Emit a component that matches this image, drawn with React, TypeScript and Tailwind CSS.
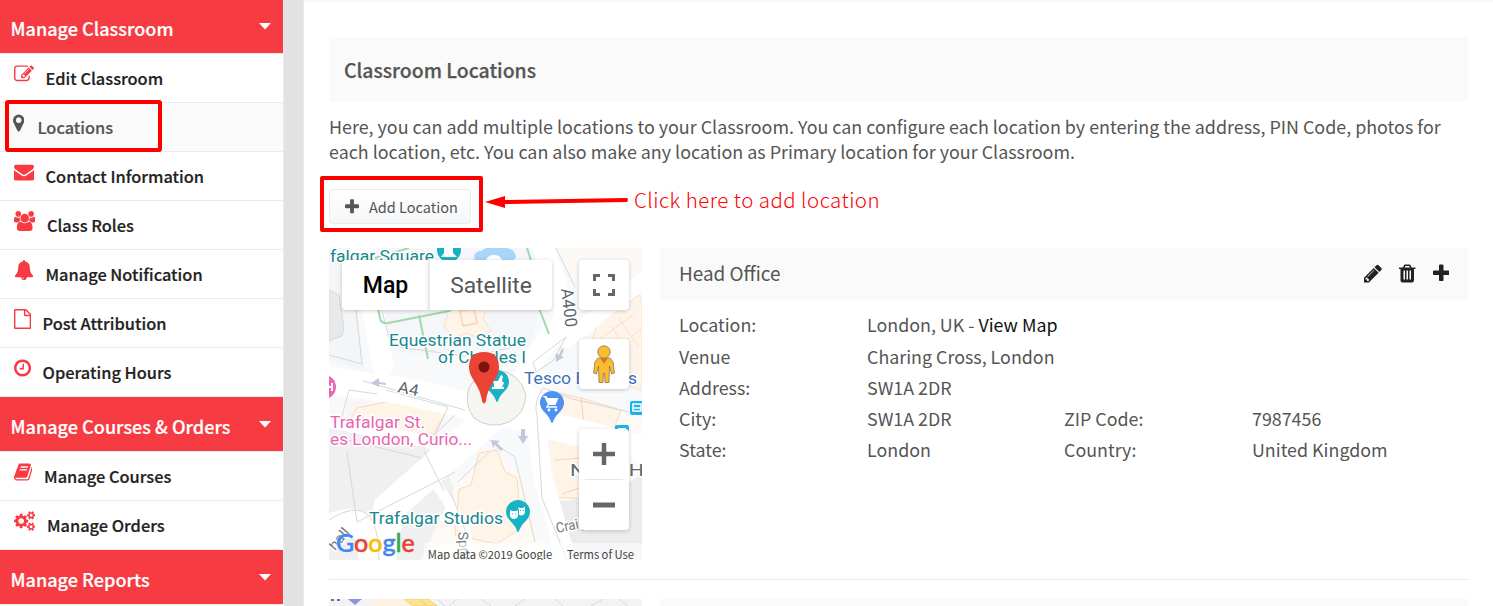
import { ReactNode } from "react";

interface IconShape {
  box: string;
  width: number;
  d: string;
}

const ICONS: Record<string, IconShape> = {
  edit: {
    box: "0 0 1792 1792",
    width: 20,
    d: "M888 1184l116-116-152-152-116 116v56h96v96h56zm440-720q-16-16-33 1l-350 350q-17 17-1 33t33-1l350-350q17-17 1-33zm80 594v190q0 119-84.500 203.500t-203.500 84.500h-832q-119 0-203.500-84.500t-84.500-203.500v-832q0-119 84.500-203.500t203.500-84.500h832q63 0 117 25 15 7 18 23 3 17-9 29l-49 49q-14 14-32 8-23-6-45-6h-832q-66 0-113 47t-47 113v832q0 66 47 113t113 47h832q66 0 113-47t47-113v-126q0-13 9-22l64-64q15-15 35-7t20 29zm-96-738l288 288-672 672h-288v-288zm444 132l-92 92-288-288 92-92q28-28 68-28t68 28l152 152q28 28 28 68t-28 68z",
  },
  marker: {
    box: "384 0 1024 1792",
    width: 11.4,
    d: "M1152 640q0-106-75-181t-181-75-181 75-75 181 75 181 181 75 181-75 75-181zm256 0q0 109-33 179l-364 774q-16 33-47.500 52t-67.500 19-67.500-19-46.500-52l-365-774q-33-70-33-179 0-212 150-362t362-150 362 150 150 362z",
  },
  envelope: {
    box: "0 0 1792 1792",
    width: 20,
    d: "M1792 710v794q0 66-47 113t-113 47h-1472q-66 0-113-47t-47-113v-794q44 49 101 87 362 246 497 345 57 42 92.500 65.500t94.500 48 110 24.500h2q51 0 110-24.500t94.500-48 92.500-65.500q170-123 498-345 57-39 100-87zm0-294q0 79-49 151t-122 123q-376 261-468 325-10 7-42.500 30.500t-54 38-52 32.500-57.500 27-50 9h-2q-23 0-50-9t-57.500-27-52-32.500-54-38-42.500-30.500q-91-64-262-182.500t-205-142.500q-62-42-117-115.500t-55-136.500q0-78 41.500-130t118.500-52h1472q65 0 112.500 47t47.500 113z",
  },
  users: {
    box: "0 0 1920 1792",
    width: 21.4,
    d: "M593 896q-162 5-265 128h-134q-82 0-138-40.500t-56-118.500q0-353 124-353 6 0 43.500 21t97.500 42.500 119 21.500q67 0 133-23-5 37-5 66 0 139 81 256zm1071 637q0 120-73 189.500t-194 69.500h-874q-121 0-194-69.500t-73-189.500q0-53 3.500-103.500t14-109 26.500-108.500 43-97.500 62-81 85.500-53.500 111.500-20q10 0 43 21.500t73 48 107 48 135 21.500 135-21.500 107-48 73-48 43-21.500q61 0 111.500 20t85.500 53.500 62 81 43 97.500 26.500 108.500 14 109 3.500 103.500zm-1024-1277q0 106-75 181t-181 75-181-75-75-181 75-181 181-75 181 75 75 181zm704 384q0 159-112.500 271.500t-271.500 112.500-271.500-112.500-112.500-271.500 112.500-271.500 271.500-112.500 271.500 112.500 112.500 271.500zm576 225q0 78-56 118.500t-138 40.500h-134q-103-123-265-128 81-117 81-256 0-29-5-66 66 23 133 23 59 0 119-21.500t97.500-42.500 43.500-21q124 0 124 353zm-128-609q0 106-75 181t-181 75-181-75-75-181 75-181 181-75 181 75 75 181z",
  },
  bell: {
    box: "0 0 1792 1792",
    width: 20,
    d: "M912 1696q0-16-16-16-59 0-101.5-42.5t-42.500-101.5q0-16-16-16t-16 16q0 73 51.500 124.500t124.500 51.500q16 0 16-16zm816-288q0 52-38 90t-90 38h-448q0 106-75 181t-181 75-181-75-75-181h-448q-52 0-90-38t-38-90q50-42 91-88t85-119.500 74.500-158.500 50-206 19.500-260q0-152 117-282.500t307-158.500q-8-19-8-39 0-40 28-68t68-28 68 28 28 68q0 20-8 39 190 28 307 158.500t117 282.500q0 139 19.500 260t50 206 74.500 158.500 85 119.500 91 88z",
  },
  file: {
    box: "128 0 1536 1792",
    width: 17.1,
    d: "M1596 380q28 28 48 76t20 88v1152q0 40-28 68t-68 28h-1344q-40 0-68-28t-28-68v-1600q0-40 28-68t68-28h896q40 0 88 20t76 48zm-444-244v376h376q-10-29-22-41l-313-313q-12-12-41-22zm384 1528v-1024h-416q-40 0-68-28t-28-68v-416h-768v1536h1280z",
  },
  clock: {
    box: "128 0 1536 1792",
    width: 17.1,
    d: "M1024 544v448q0 14-9 23t-23 9h-320q-14 0-23-9t-9-23v-64q0-14 9-23t23-9h224v-352q0-14 9-23t23-9h64q14 0 23 9t9 23zm416 352q0-148-73-273t-198-198-273-73-273 73-198 198-73 273 73 273 198 198 273 73 273-73 198-198 73-273zm224 0q0 209-103 385.500t-279.500 279.500-385.500 103-385.500-103-279.500-279.500-103-385.500 103-385.500 279.500-279.500 385.500-103 385.500 103 279.500 279.500 103 385.500z",
  },
  book: {
    box: "64 0 1664 1792",
    width: 18.6,
    d: "M1703 478q40 57 18 129l-275 906q-19 64-76.500 107.500t-122.500 43.500h-923q-77 0-148.500-53.500t-99.500-131.500q-24-67-2-127 0-4 3-27t4-37q1-8-3-21.500t-3-19.500q2-11 8-21t16.500-23.500 16.500-23.500q23-38 45-91.500t30-91.500q3-10 .5-30t-.5-28q3-11 17-28t17-23q21-36 42-92t25-90q1-9-2.500-32t.5-28q4-13 22-30.500t22-22.500q19-26 42.500-84.500t27.500-96.500q1-8-3-25.500t-2-26.500q2-8 9-18t18-23 17-21q8-12 16.500-30.500t15-35 16-36 19.500-32 26.500-23.500 36-11.500 47.500 5.500l-1 3q38-9 51-9h761q74 0 114 56t18 130l-274 906q-36 119-71.500 153.500t-128.500 34.500h-869q-27 0-38 15-11 16-1 43 24 70 144 70h923q29 0 56-15.500t35-41.500l300-987q7-22 5-57 38 15 59 43zm-1064 2q-4 13 2 22.500t20 9.500h608q13 0 25.500-9.500t16.500-22.500l21-64q4-13-2-22.500t-20-9.500h-608q-13 0-25.500 9.500t-16.500 22.500zm-83 256q-4 13 2 22.500t20 9.500h608q13 0 25.500-9.500t16.500-22.500l21-64q4-13-2-22.500t-20-9.500h-608q-13 0-25.500 9.500t-16.500 22.500z",
  },
  cogs: {
    box: "0 0 1920 1792",
    width: 21.4,
    d: "M896 896q0-106-75-181t-181-75-181 75-75 181 75 181 181 75 181-75 75-181zm768 512q0-52-38-90t-90-38-90 38-38 90q0 53 37.500 90.500t90.500 37.500 90.500-37.500 37.500-90.500zm0-1024q0-52-38-90t-90-38-90 38-38 90q0 53 37.500 90.500t90.500 37.500 90.500-37.500 37.500-90.500zm-384 421v185q0 10-7 19.500t-16 10.500l-155 24q-11 35-32 76 34 48 90 115 7 11 7 20 0 12-7 19-23 30-82.500 89.500t-78.500 59.500q-11 0-21-7l-115-90q-37 19-77 31-11 108-23 155-7 24-30 24h-186q-11 0-20-7.500t-10-17.500l-23-153q-34-10-75-31l-118 89q-7 7-20 7-11 0-21-8-144-133-144-160 0-9 7-19 10-14 41-53t47-61q-23-44-35-82l-152-24q-10-1-17-9.500t-7-19.500v-185q0-10 7-19.500t16-10.500l155-24q11-35 32-76-34-48-90-115-7-11-7-20 0-12 7-20 22-30 82-89t79-59q11 0 21 7l115 90q34-18 77-32 11-108 23-154 7-24 30-24h186q11 0 20 7.500t10 17.500l23 153q34 10 75 31l118-89q8-7 20-7 11 0 21 8 144 133 144 160 0 8-7 19-12 16-42 54t-45 60q23 48 34 82l152 23q10 2 17 10.500t7 19.500zm640 533v140q0 16-149 31-12 27-30 52 51 113 51 138 0 4-4 7-122 71-124 71-8 0-46-47t-52-68q-20 2-30 2t-30-2q-14 21-52 68t-46 47q-2 0-124-71-4-3-4-7 0-25 51-138-18-25-30-52-149-15-149-31v-140q0-16 149-31 13-29 30-52-51-113-51-138 0-4 4-7 4-2 35-20t59-34 30-16q8 0 46 46.500t52 67.500q20-2 30-2t30 2q51-71 92-112l6-2q4 0 124 70 4 3 4 7 0 25-51 138 17 23 30 52 149 15 149 31zm0-1024v140q0 16-149 31-12 27-30 52 51 113 51 138 0 4-4 7-122 71-124 71-8 0-46-47t-52-68q-20 2-30 2t-30-2q-14 21-52 68t-46 47q-2 0-124-71-4-3-4-7 0-25 51-138-18-25-30-52-149-15-149-31v-140q0-16 149-31 13-29 30-52-51-113-51-138 0-4 4-7 4-2 35-20t59-34 30-16q8 0 46 46.500t52 67.500q20-2 30-2t30 2q51-71 92-112l6-2q4 0 124 70 4 3 4 7 0 25-51 138 17 23 30 52 149 15 149 31z",
  },
  pencil: {
    box: "128 0 1536 1792",
    width: 18,
    d: "M491 1536l91-91-235-235-91 91v107h128v128h107zm523-928q0-22-22-22-10 0-17 7l-542 542q-7 7-7 17 0 22 22 22 10 0 17-7l542-542q7-7 7-17zm-54-192l416 416-832 832h-416v-416zm683 96q0 53-37 90l-166 166-416-416 166-165q36-38 90-38 53 0 91 38l235 234q37 39 37 91z",
  },
  trash: {
    box: "192 0 1408 1792",
    width: 16.5,
    d: "M704 1376v-704q0-14-9-23t-23-9h-64q-14 0-23 9t-9 23v704q0 14 9 23t23 9h64q14 0 23-9t9-23zm256 0v-704q0-14-9-23t-23-9h-64q-14 0-23 9t-9 23v704q0 14 9 23t23 9h64q14 0 23-9t9-23zm256 0v-704q0-14-9-23t-23-9h-64q-14 0-23 9t-9 23v704q0 14 9 23t23 9h64q14 0 23-9t9-23zm-544-992h448l-48-117q-7-9-17-11h-317q-10 2-17 11zm928 32v64q0 14-9 23t-23 9h-96v948q0 83-47 143.500t-113 60.500h-832q-66 0-113-58.500t-47-141.500v-952h-96q-14 0-23-9t-9-23v-64q0-14 9-23t23-9h309l70-167q15-37 54-63t79-26h320q40 0 79 26t54 63l70 167h309q14 0 23 9t9 23z",
  },
  plus: {
    box: "192 0 1408 1792",
    width: 16.5,
    d: "M1600 736v192q0 40-28 68t-68 28h-416v416q0 40-28 68t-68 28h-192q-40 0-68-28t-28-68v-416h-416q-40 0-68-28t-28-68v-192q0-40 28-68t68-28h416v-416q0-40 28-68t68-28h192q40 0 68 28t28 68v416h416q40 0 68 28t28 68z",
  },
};

function Icon({ name, scale = 1 }: { name: string; scale?: number }) {
  const { box, width, d } = ICONS[name];
  return (
    <svg viewBox={box} width={width * scale} className="shrink-0 fill-current" aria-hidden="true">
      <path d={d} />
    </svg>
  );
}

interface MenuItem {
  icon: string;
  label: string;
  active?: boolean;
}

const MENU: { title: string; items: MenuItem[] }[] = [
  {
    title: "Manage Classroom",
    items: [
      { icon: "edit", label: "Edit Classroom" },
      { icon: "marker", label: "Locations", active: true },
      { icon: "envelope", label: "Contact Information" },
      { icon: "users", label: "Class Roles" },
      { icon: "bell", label: "Manage Notification" },
      { icon: "file", label: "Post Attribution" },
      { icon: "clock", label: "Operating Hours" },
    ],
  },
  {
    title: "Manage Courses & Orders",
    items: [
      { icon: "book", label: "Manage Courses" },
      { icon: "cogs", label: "Manage Orders" },
    ],
  },
  { title: "Manage Reports", items: [] },
];

function Sidebar() {
  return (
    <aside className="w-[283px] shrink-0">
      {MENU.map((group, i) => (
        <section key={group.title}>
          <h2
            className={
              i === 0
                ? "flex h-[54px] justify-between border-b border-[#ebebeb] bg-[#f63b42] pt-3.5 pr-3 pl-[10.500px] text-white"
                : "flex h-[55px] justify-between border-b border-[#ebebeb] bg-[#f63b42] pt-[14.500px] pr-3 pl-[10.500px] text-white"
            }
          >
            <span className="text-[18.100px] leading-7 font-medium [-webkit-text-stroke:0.2px]">{group.title}</span>
            <svg viewBox="0 0 12 7" className="mt-[9px] h-[7px] w-3 fill-white">
              <path d="M0 0h12L6 6.500z" />
            </svg>
          </h2>
          <ul>
            {group.items.map((item) => (
              <li
                key={item.label}
                className={
                  item.active
                    ? "relative flex h-[49px] gap-[13px] border-b border-[#ebebeb] bg-[#fafafa] pl-[13px] text-[#555]"
                    : "flex h-[49px] gap-3 border-b border-[#ebebeb] pl-[13.500px] text-[#222]"
                }
              >
                <span className={item.active ? "mt-2.5 flex h-5" : "mt-2.5 flex h-5 text-[#f63b42]"}>
                  <Icon name={item.icon} />
                </span>
                <span className="mt-3 h-6 text-[16.400px] leading-6 font-medium [-webkit-text-stroke:0.2px]">{item.label}</span>
                {item.active && (
                  <span className="absolute -top-[3px] left-[4.500px] h-[52px] w-[157px] rounded-[3px] border-4 border-[#fe0000]" />
                )}
              </li>
            ))}
          </ul>
        </section>
      ))}
    </aside>
  );
}

interface LabelProps {
  x: number;
  y: number;
  size: number;
  color: string;
  width: number;
  children: ReactNode;
}

function MapLabel({ x, y, size, color, width, children }: LabelProps) {
  return (
    <text
      x={x}
      y={y}
      fontSize={size}
      textLength={width}
      lengthAdjust="spacingAndGlyphs"
      fill={color}
      stroke="#fff"
      strokeWidth={3}
      strokeLinejoin="round"
      paintOrder="stroke"
    >
      {children}
    </text>
  );
}

function Pin({ x, y, color }: { x: number; y: number; color: string }) {
  return (
    <path
      transform={`translate(${x} ${y})`}
      fill={color}
      d="M0-12A12 12 0 0 1 12 0C12 8 3 11 1 19Q0 21-1 19C-3 11-12 8-12 0A12 12 0 0 1 0-12z"
    />
  );
}

function MapTiles() {
  return (
    <svg viewBox="0 0 313 312" className="block h-[312px] w-[313px] font-['Roboto',sans-serif]">
      <rect width="313" height="312" fill="#f8f9fa" />
      {/* blocks */}
      <path d="M0 0h20L36 124 0 112z" fill="#f4f5f6" />
      <path d="M0 42l10 5 5 33-2 8-13 5z" fill="#e8e9eb" stroke="#d9dadd" />
      <path d="M35 0h170l5 60-8 38-86 12-58-8z" fill="#f4f6f9" />
      <path d="M230 0h83v60l-37 30-22-34z" fill="#fbf8f5" />
      <path d="M0 180Q70 174 104 204Q140 245 122 312H0z" fill="#f0f0f1" />
      <path d="M18 152l100 14-22 30-78-18z" fill="#f8f6f4" />
      <path d="M124 242l40-42 30 30 22 82H92z" fill="#fdf9f5" />
      <path d="M216 145l80 18 17 12v137h-58L214 198z" fill="#fdf9f5" />
      <path d="M226 254l54-6 33-22v86h-75z" fill="#ececee" />
      <path d="M28 160l38-8 51 12-19 33-80-20z" fill="#fff4e8" stroke="#fbd9ba" />
      <path d="M112 58l12-6 8 8 14-10 12 9-4 12 8 12-11 8-13-6-13 5-10-12 4-10z" fill="#fff4e8" stroke="#f9e0c8" />
      <path d="M131 63l14-2 3 14-14 3z" fill="none" stroke="#f9dcc0" strokeWidth="2" />
      <path d="M268 78l42-31 3 4v92l-58-26z" fill="#fff4ea" stroke="#fbdfc6" />
      <path d="M259 100l46-34M272 112l41-32M290 70l20 30M282 78l20 30" fill="none" stroke="#fbdfc6" />
      <path d="M150 205l18-3 8 22 12 6 4 50-24 16-42-9 4-46 12-4z" fill="#fff4e8" stroke="#fbd9ba" />
      <path d="M216 153l10-9 26 6 40 12-18 46 14 31-30 12-38-2z" fill="#fff4e8" stroke="#fbd9ba" />
      <path d="M216 174l42 5M219 186l36 3M252 150l5 45M226 212l39-3M233 246l40-14-6-40" fill="none" stroke="#fbd3b0" />
      {/* roads */}
      <g fill="none" stroke="#fff" strokeLinecap="round">
        <path d="M-5 132L70 142L168 164L330 205" strokeWidth="27" />
        <path d="M32-5L54 118" strokeWidth="21" />
        <path d="M213-5L238 70L206 108L180 160" strokeWidth="22" />
        <path d="M168 164L60 260L50 320" strokeWidth="31" />
        <path d="M204 150L214 230L238 312" strokeWidth="19" />
        <path d="M238 92L330 20" strokeWidth="16" />
        <path d="M110 240L136 280L142 312" strokeWidth="10" />
        <path d="M-5 173L100 194" strokeWidth="12" />
        <path d="M0 280Q50 260 42 320" strokeWidth="28" />
      </g>
      <g fill="none" stroke="#d6d8da">
        <path d="M20 0L33 116L0 107M34 133L136 162M50 51L62 98L142 109L188 98" />
        <path d="M48 146L20 142 13 168M57 142l62 17-18 39M102 190l24-23" />
        <path d="M227 0l19 39M214 140l30 11 69 16M214 140q-10 14-6 28l5 82 25 62M160 192l26 17 20 85" />
        <path d="M204 114l33-25-13 24-17 11zM129 234l31-30M115 243l-20-40M122 245l18 47" />
        <path d="M10 190l83 20M18 204l10 70M0 272q50-32 50 40M28 274l98-50" />
      </g>
      <path d="M140 140q8-17 27-18 24 2 30 25-1 19-17 27-19 8-35-4-10-12-5-30z" fill="#f5f5f1" stroke="#cfd0d0" />
      <path d="M45 40l6 30q1 6 8 5l61-12 8-6M90 67l9 44M80 0L46 10M198 0l14 44M210 60l10 26" fill="none" stroke="#a0d9ab" strokeWidth="2" />
      <path d="M146 13Q143 3 153 3Q158-3 168 0Q187-2 187 10L182 14z" fill="#a9d5f8" />
      <path d="M157 12q2-5 8-5t8 5v3h-16z" fill="#fff" />
      {/* one-way arrows */}
      <g fill="#c3c7dc">
        <path d="M42 135l8-5v4l7 1v2l-7-1v3z" />
        <path d="M227 114l0-9 3 2 3-7 2 2-3 6 3 1z" />
        <path d="M194 196l-5-8h3v-7h4v7h3z" />
        <path d="M162 192l9 1-3 2 6 6-2 2-6-6-2 3z" />
      </g>
      {/* labels */}
      <MapLabel x={1} y={14} size={17} color="#16888d" width={104}>falgar Square</MapLabel>
      <circle cx="120" cy="2" r="12" fill="#17b3c4" />
      <path d="M112 9l3-4V0h9v5l4 4z" fill="#fff" />
      <MapLabel x={60} y={98} size={17} color="#16888d" width={137}>Equestrian Statue</MapLabel>
      <MapLabel x={109} y={115} size={17} color="#16888d" width={88}>of Charles I</MapLabel>
      <MapLabel x={195} y={136} size={17} color="#3a70b5" width={113}>Tesco Express</MapLabel>
      <g transform="translate(232 41) rotate(83)">
        <MapLabel x={0} y={0} size={17} color="#5b686d" width={39}>A400</MapLabel>
      </g>
      <g transform="translate(68 144) rotate(12)">
        <MapLabel x={0} y={0} size={16} color="#5b686d" width={21}>A4</MapLabel>
      </g>
      <MapLabel x={1} y={180} size={17} color="#e864b1" width={95}>Trafalgar St.</MapLabel>
      <MapLabel x={1} y={197} size={17} color="#e864b1" width={142}>es London, Curio...</MapLabel>
      <MapLabel x={40} y={276} size={17} color="#16888d" width={134}>Trafalgar Studios</MapLabel>
      <MapLabel x={241} y={228} size={16} color="#5b686d" width={74}>North  H</MapLabel>
      <g transform="translate(228 285) rotate(-12)">
        <MapLabel x={0} y={0} size={14} color="#777" width={30}>Craig</MapLabel>
      </g>
      <g transform="translate(129 284) rotate(86)">
        <MapLabel x={0} y={0} size={14} color="#777" width={32}>Sprin</MapLabel>
      </g>
      <g transform="translate(6 303) rotate(-50)">
        <MapLabel x={0} y={0} size={14} color="#777" width={24}>hall</MapLabel>
      </g>
      <circle cx="-5" cy="139" r="12" fill="#ec68b3" />
      <path d="M-4 139h7M3 135v8" fill="none" stroke="#fff" strokeWidth="2" />
      <Pin x={168} y={134} color="#17b3c4" />
      <path d="M163 141v-2h2v-4h-2v-2h6l3-6 2 1-1 5 2 2-2 4h2v2z" fill="#fff" />
      <Pin x={223} y={155} color="#4d91f2" />
      <path d="M214 148h3.500l1 2h11l-3 7h-7.500l-3-7-1-1h-1z" fill="#fff" />
      <path d="M219 157l-1 2h10" fill="none" stroke="#fff" strokeWidth="1.500" />
      <circle cx="220" cy="162" r="1.400" fill="#fff" />
      <circle cx="227" cy="162" r="1.400" fill="#fff" />
      <Pin x={189} y={264} color="#17b3c4" />
      <path d="M181 262l2 1h4l2-1v6q-1 3-4 3t-4-3zM189 259l2 1h3l2-1.500v6q-1 3-4 3l-2-.5v-5z" fill="#fff" />
      <path d="M183 266h1M186 266h1M191 262.500h1M194 262.500h1" stroke="#17b3c4" />
      <rect x="301" y="153" width="14" height="14" rx="2" fill="#1cb4ea" />
      <path d="M304 156h8v7h-8zM304 160h8" fill="none" stroke="#fff" strokeWidth="1.500" />
      <rect x="286" y="177" width="14" height="14" rx="2" fill="#1cb4ea" />
      <rect x="289" y="180" width="8" height="6" fill="#fff" />
      {/* location marker */}
      <path d="M155 104q15 0 15 15c0 12-11 17-13 34q-2 5-4 0c-2-17-13-22-13-34q0-15 15-15z" fill="#ea4335" />
      <circle cx="155" cy="119" r="5.500" fill="#7b1410" />
    </svg>
  );
}

function MapView() {
  return (
    <div className="relative h-[312px] w-[313px] shrink-0 overflow-hidden">
      <MapTiles />
      <div className="absolute top-3 left-[13px] flex h-[50px] font-['Roboto',sans-serif] text-[23px] leading-[52px]">
        <button className="w-[87px] rounded-l-sm bg-white font-medium text-black shadow-[0_1px_4px_rgba(0,0,0,0.2)]">Map</button>
        <button className="w-[123px] rounded-r-sm border-l border-gray-200 bg-white text-[22.800px] text-[#565656] shadow-[0_1px_4px_rgba(0,0,0,0.2)]">
          Satellite
        </button>
      </div>
      <button className="absolute top-3 left-[250px] flex size-[50px] items-center justify-center rounded-sm bg-white shadow-[0_1px_4px_rgba(0,0,0,0.2)]">
        <svg viewBox="0 0 22 22" className="size-[22px]" fill="none" stroke="#666" strokeWidth="3">
          <path d="M1.500 7V1.500H7M15 1.500h5.500V7M20.500 15v5.500H15M7 20.500H1.500V15" />
        </svg>
      </button>
      <button className="absolute top-[91px] left-[250px] flex size-[50px] items-center justify-center rounded-sm bg-white shadow-[0_1px_4px_rgba(0,0,0,0.2)]">
        <svg viewBox="0 0 22 38" className="h-[38px] w-[22px]" fill="#fbbc2d" stroke="#7d6a4c" strokeWidth="0.700">
          <path d="M5 13h12l3 4 1.500 11-3 1-2-8-.5 16.500h-4L11.500 28h-1L10 37.500H6L5.500 21l-2 8-3-1L2 17z" />
          <path d="M7 13h8l-4 6z" fill="#e0782a" stroke="none" />
          <circle cx="11" cy="7" r="6.200" />
        </svg>
      </button>
      <div className="absolute top-[181px] left-[250px] flex h-[101px] w-[50px] flex-col items-center rounded-sm bg-white shadow-[0_1px_4px_rgba(0,0,0,0.2)]">
        <svg viewBox="0 0 22 22" className="mt-3.5 size-[22px]" stroke="#666" strokeWidth="4.500">
          <path d="M0 11h22M11 0v22" />
        </svg>
        <span className="mt-3.5 h-px w-[38px] bg-[#e6e6e6]" />
        <svg viewBox="0 0 22 22" className="mt-3.5 size-[22px]" stroke="#666" strokeWidth="5">
          <path d="M0 11h22" />
        </svg>
      </div>
      <span className="absolute top-[278px] left-[7px] font-['Lato',sans-serif] text-[25px] leading-8 font-medium [text-shadow:0_0_2px_#fff] [-webkit-text-stroke:0.5px]">
        <span className="text-[#4285f4]">G</span>
        <span className="text-[#ea4335]">o</span>
        <span className="text-[#fbbc05]">o</span>
        <span className="text-[#4285f4]">g</span>
        <span className="text-[#34a853]">l</span>
        <span className="text-[#ea4335]">e</span>
      </span>
      <div className="absolute right-0 bottom-0 flex h-[17px] gap-[15px] bg-white/60 pr-2 pl-1 text-[11.200px] leading-[23px] whitespace-nowrap text-[#444]">
        <span>Map data ©2019 Google</span>
        <span>Terms of Use</span>
      </div>
    </div>
  );
}

// top strip of the next location's map
function NextMapStrip() {
  return (
    <svg viewBox="0 0 313 7" className="block h-[7px] w-[313px] shrink-0">
      <rect width="313" height="7" fill="#f3f3f4" />
      <path d="M40 0h35l8 7H44z" fill="#fdf1e2" />
      <path d="M75 0h24l9 7H84zM89 0l10 7" fill="#fde293" stroke="#f5cf68" />
      <path d="M19 0h14l-7 6z" fill="#8e93dc" />
      <path d="M2 1h3M8 1h3" stroke="#5b7bb0" strokeWidth="2" />
      <path d="M108 0l8 7M128 0l-8 7M152 0l10 7M186 7l10-7M226 0l8 7M262 7l12-7M290 0l9 7" stroke="#d7d9db" fill="none" />
    </svg>
  );
}

const DETAILS = [
  ["Location:", "London, UK - "],
  ["Venue", "Charing Cross, London"],
  ["Address:", "SW1A 2DR"],
  ["City:", "SW1A 2DR", "ZIP Code:", "7987456"],
  ["State:", "London", "Country:", "United Kingdom"],
];

function LocationCard() {
  return (
    <div className="min-w-0 flex-1">
      <div className="flex h-[52px] items-center justify-between bg-[#fafafa] pr-[19px] pb-0.5 pl-[19px]">
        <h3 className="text-[18.900px]">Head Office</h3>
        <div className="flex items-center gap-[17px] text-[#222]">
          <Icon name="pencil" />
          <Icon name="trash" />
          <Icon name="plus" />
        </div>
      </div>
      <dl className="mt-[9.400px] pl-[19px] text-[17.850px] leading-[31.200px]">
        {DETAILS.map((row) => (
          <div key={row[0]} className="grid grid-cols-[188px_197px_188px_1fr] whitespace-nowrap">
            <dt>{row[0]}</dt>
            <dd>
              {row[1]}
              {row[0] === "Location:" && <a className="text-[#111]">View Map</a>}
            </dd>
            {row[2] && <dt>{row[2]}</dt>}
            {row[3] && <dd>{row[3]}</dd>}
          </div>
        ))}
      </dl>
    </div>
  );
}

export default function App() {
  return (
    <div className="flex h-[606px] w-[1493px] overflow-hidden bg-white font-['Noto_Sans_CJK_JP',sans-serif] text-[#555]">
      <Sidebar />
      <div className="w-[21px] shrink-0 border-x border-[#ececec] bg-[#e2e2e2]" />
      <main className="flex-1 bg-linear-to-b from-[#f7f7f7] to-white to-[4px] pt-[37px] pr-[25px] pl-[25px]">
        <h1 className="flex h-[65px] items-center bg-[#fafafa] pt-px pl-[15px] text-[19.400px] font-medium [-webkit-text-stroke:0.25px]">
          Classroom Locations
        </h1>
        <p className="mt-3 h-[51px] text-[17.900px] leading-[25px] whitespace-nowrap">
          Here, you can add multiple locations to your Classroom. You can configure each location by entering the address, PIN Code, photos for
          <br />
          each location, etc. You can also make any location as Primary location for your Classroom.
        </p>

        <div className="relative mt-6 flex h-[35px]">
          <button className="flex h-[35px] w-[142px] items-center gap-2.5 rounded border border-[#ebebeb] bg-linear-to-b from-white to-[#f5f6f7] pl-[15px] text-[14.500px] text-[#555]">
            <Icon name="plus" scale={0.85} />
            Add Location
          </button>
          {/* callout */}
          <span className="absolute -top-[13px] -left-[9px] h-[56px] w-[163px] rounded-[2px] border-4 border-[#fe0000]" />
          <svg viewBox="0 0 144 14" className="absolute top-[5px] left-[156px] h-[14px] w-[144px]">
            <path d="M0 8l20-6v4l122-2q2 1 0 4L20 10v4z" fill="#fe0000" />
          </svg>
          <span className="absolute -top-[4px] left-[305px] font-['Noto_Sans_CJK_JP',sans-serif] text-[20.500px] leading-7 font-light tracking-[0.45px] whitespace-nowrap text-[#fe0000]">
            Click here to add location
          </span>
        </div>

        <div className="mt-6 flex h-[332px] gap-[18px] border-b border-[#ebebeb]">
          <MapView />
          <LocationCard />
        </div>
        <div className="mt-[19px] flex gap-[18px]">
          <NextMapStrip />
          <div className="h-[7px] flex-1 bg-[#fafafa]" />
        </div>
      </main>
    </div>
  );
}
